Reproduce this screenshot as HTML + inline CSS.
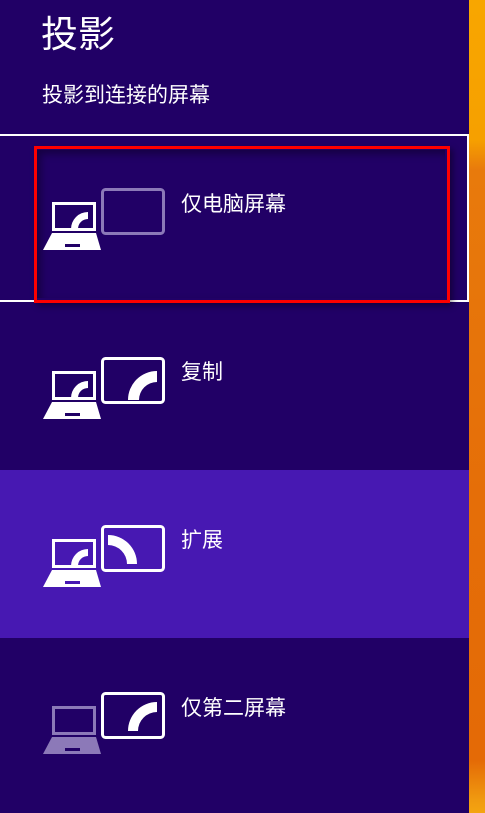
<!DOCTYPE html>
<html><head><meta charset="utf-8"><style>
body{margin:0;width:485px;height:813px;overflow:hidden;background:#210066;font-family:"Liberation Sans","Noto Sans CJK SC",sans-serif;position:relative}
.strip{position:absolute;left:469px;top:0;width:16px;height:813px;background:linear-gradient(180deg,#f8a600 0,#f6a000 140px,#e87a0c 170px,#e56e08 500px,#e46a06 760px,#f09a10 800px,#f4a410 813px)}
.t{position:absolute;color:#fff;white-space:nowrap}
.item{position:absolute;left:0;width:469px;height:168px}
svg{position:absolute;left:40px}
</style></head><body>
<div class="strip"></div>
<div class="t" style="left:41px;top:4px;font-size:37px">投影</div>
<div class="t" style="left:42px;top:79px;font-size:21px">投影到连接的屏幕</div>

<div class="item" style="top:470px;background:#4718b2"></div>

<div style="position:absolute;left:-2px;top:134px;width:467px;height:164px;border:2px solid #fff"></div>
<div style="position:absolute;left:37px;top:150px;width:408px;height:148px;box-shadow:inset 4px 4px 8px rgba(0,0,0,.35)"></div>
<div style="position:absolute;left:34px;top:146px;width:410px;height:151px;border:3px solid #f00;box-shadow:3px 3px 6px rgba(0,0,0,.4)"></div>

<!-- item 1 -->
<svg style="top:186px" width="130" height="70">
<rect x="62.5" y="3.5" width="61" height="44" rx="3" fill="none" stroke="#8c79b8" stroke-width="3"/>
<rect x="13.5" y="17.5" width="41" height="26" fill="none" stroke="#fff" stroke-width="3"/>
<path d="M31 43A17 17 0 0 1 48 26L48 33A10 10 0 0 0 38 43Z" fill="#fff"/>
<path d="M12 47H56L61 64H3Z" fill="#fff"/><rect x="25" y="58" width="15" height="3" fill="#210066"/>
</svg>
<div class="t" style="left:181px;top:188px;font-size:21px">仅电脑屏幕</div>

<!-- item 2 -->
<svg style="top:355px" width="130" height="70">
<rect x="62.5" y="3.5" width="61" height="44" rx="3" fill="none" stroke="#fff" stroke-width="3"/>
<path d="M88 45A29 29 0 0 1 117 16L117 27A18 18 0 0 0 99 45Z" fill="#fff"/>
<rect x="13.5" y="17.5" width="41" height="26" fill="none" stroke="#fff" stroke-width="3"/>
<path d="M31 43A17 17 0 0 1 48 26L48 33A10 10 0 0 0 38 43Z" fill="#fff"/>
<path d="M12 47H56L61 64H3Z" fill="#fff"/><rect x="25" y="58" width="15" height="3" fill="#210066"/>
</svg>
<div class="t" style="left:181px;top:356px;font-size:21px">复制</div>

<!-- item 3 -->
<svg style="top:523px" width="130" height="70">
<rect x="62.5" y="3.5" width="61" height="44" rx="3" fill="none" stroke="#fff" stroke-width="3"/>
<path d="M68 12A29 29 0 0 1 97 41L87 41A19 19 0 0 0 68 22Z" fill="#fff"/>
<rect x="13.5" y="17.5" width="41" height="26" fill="none" stroke="#fff" stroke-width="3"/>
<path d="M31 43A17 17 0 0 1 48 26L48 33A10 10 0 0 0 38 43Z" fill="#fff"/>
<path d="M12 47H56L61 64H3Z" fill="#fff"/><rect x="25" y="58" width="15" height="3" fill="#4718b2"/>
</svg>
<div class="t" style="left:181px;top:524px;font-size:21px">扩展</div>

<!-- item 4 -->
<svg style="top:690px" width="130" height="70">
<rect x="62.5" y="3.5" width="61" height="44" rx="3" fill="none" stroke="#fff" stroke-width="3"/>
<path d="M88 41A29 29 0 0 1 117 12L117 22A19 19 0 0 0 98 41Z" fill="#fff"/>
<rect x="13.5" y="17.5" width="41" height="26" fill="none" stroke="#8c79b8" stroke-width="3"/>
<path d="M12 47H56L61 64H3Z" fill="#8c79b8"/><rect x="25" y="58" width="15" height="3" fill="#210066"/>
</svg>
<div class="t" style="left:181px;top:692px;font-size:21px">仅第二屏幕</div>
</body></html>
